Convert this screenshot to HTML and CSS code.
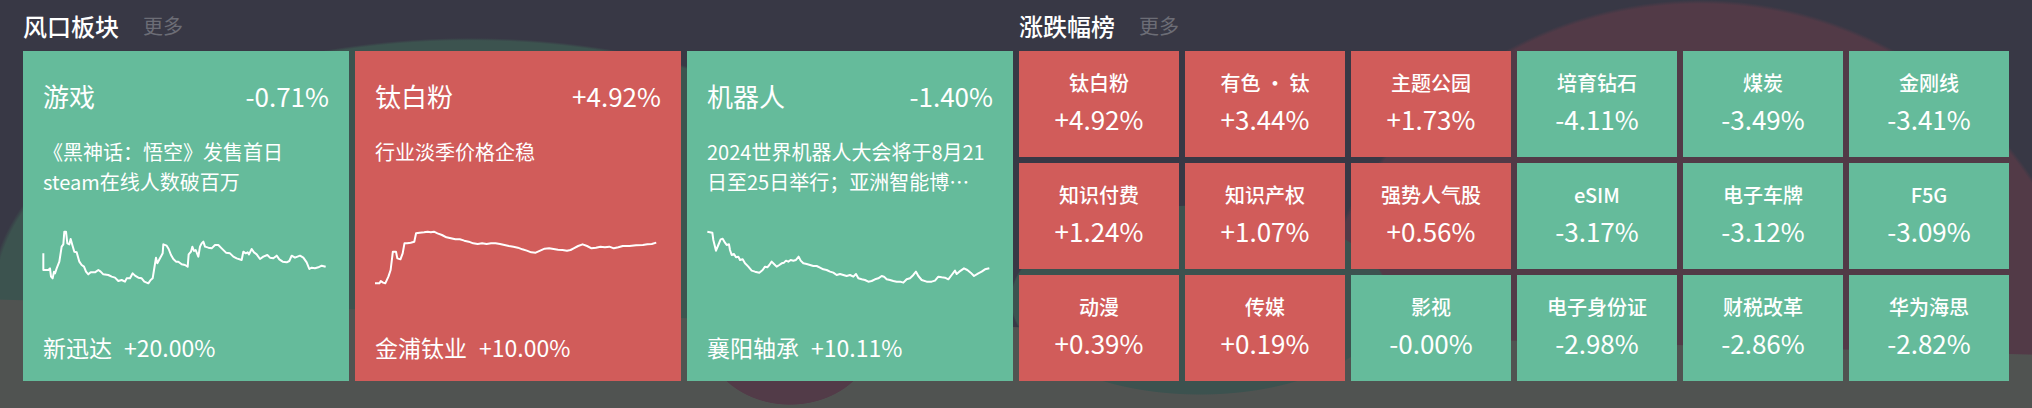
FILE: index.html
```html
<!DOCTYPE html>
<html lang="zh-CN">
<head>
<meta charset="utf-8">
<title>风口板块 / 涨跌幅榜</title>
<link rel="stylesheet" href="styles.css">
</head>
<body>
<div class="page">
  <section class="panel">
    <div class="panel-head"><h2 class="panel-title">风口板块</h2><span class="more">更多</span></div>
    <div class="cards">
      <div class="card down">
        <div class="card-head"><span>游戏</span><span>-0.71%</span></div>
        <p class="desc">《黑神话：悟空》发售首日steam在线人数破百万</p>
        <svg class="spark" viewBox="0 0 286 65" preserveAspectRatio="none">
          <polyline transform="translate(-13,-10) scale(0.33333)" vector-effect="non-scaling-stroke" points="40,115 40,165 55,165 60,160 63,185 68,190 72,170 75,175 80,160 88,140 95,95 100,88 103,50 108,50 112,85 118,88 122,72 127,90 133,110 140,112 148,140 155,150 162,155 168,170 175,178 182,172 195,172 205,165 212,170 220,178 235,180 245,185 255,188 265,198 275,195 285,200 290,190 300,190 308,175 315,182 325,188 335,190 343,200 355,205 362,195 368,190 372,165 378,128 382,145 390,130 398,115 400,88 410,92 416,102 423,120 430,132 438,140 445,140 455,148 465,150 473,155 476,118 483,110 487,95 492,108 497,105 505,125 510,95 515,85 520,80 525,95 535,98 545,100 555,90 565,90 575,100 588,113 600,115 610,125 620,130 635,135 640,110 647,115 653,112 657,118 665,102 672,112 680,118 690,132 700,125 712,120 720,128 730,130 740,122 748,133 758,140 770,142 778,138 785,122 795,128 810,122 820,128 830,142 838,162 845,158 855,160 865,157 875,152 887,155"/>
        </svg>
        <div class="lead"><span>新迅达</span><span class="lead-pct">+20.00%</span></div>
      </div>
      <div class="card up">
        <div class="card-head"><span>钛白粉</span><span>+4.92%</span></div>
        <p class="desc">行业淡季价格企稳</p>
        <svg class="spark" viewBox="0 0 286 65" preserveAspectRatio="none">
          <polyline transform="translate(-375,-25) scale(0.44643,0.33333)" vector-effect="non-scaling-stroke" points="840,250 850,250 853,243 858,248 863,250 870,230 875,210 880,155 887,155 890,175 897,178 902,160 906,130 912,130 920,128 928,125 932,100 940,98 950,97 958,95 965,97 972,95 980,100 990,105 1000,112 1010,115 1020,118 1030,118 1040,122 1050,125 1060,130 1070,132 1080,130 1090,132 1100,130 1110,130 1120,132 1130,135 1140,138 1150,140 1160,143 1170,148 1180,152 1190,157 1200,158 1210,152 1220,146 1230,145 1240,147 1250,149 1260,150 1270,152 1278,150 1285,145 1295,138 1305,133 1315,138 1325,145 1335,143 1345,140 1355,142 1365,140 1375,145 1385,142 1395,138 1410,138 1425,136 1440,135 1450,133 1460,132 1470,128"/>
        </svg>
        <div class="lead"><span>金浦钛业</span><span class="lead-pct">+10.00%</span></div>
      </div>
      <div class="card down">
        <div class="card-head"><span>机器人</span><span>-1.40%</span></div>
        <p class="desc">2024世界机器人大会将于8月21日至25日举行；亚洲智能博Expo 2024同期举办</p>
        <svg class="spark" viewBox="0 0 286 65" preserveAspectRatio="none">
          <polyline transform="translate(-27,-225) scale(0.33333)" vector-effect="non-scaling-stroke" points="82,695 97,698 100,720 108,752 115,735 122,718 128,716 135,728 140,735 147,733 150,750 155,765 162,762 168,772 175,770 180,780 188,778 195,790 205,800 215,812 225,815 238,818 248,810 255,800 262,802 268,795 275,785 282,792 290,800 298,795 305,790 312,788 318,782 325,785 332,780 340,782 348,780 356,770 362,782 370,790 380,792 390,795 400,798 410,798 420,803 430,808 440,810 450,815 460,818 470,825 480,822 490,825 500,828 510,825 520,830 528,822 535,835 545,838 555,840 565,845 575,843 585,838 595,835 605,828 612,830 620,838 630,840 640,843 650,845 660,845 670,848 680,838 690,835 700,825 708,815 715,828 725,840 740,845 755,845 765,842 775,830 785,832 795,833 805,838 815,825 825,812 830,822 838,815 852,805 862,810 872,818 882,828 895,820 905,815 915,808 928,805"/>
        </svg>
        <div class="lead"><span>襄阳轴承</span><span class="lead-pct">+10.11%</span></div>
      </div>
    </div>
  </section>
  <section class="panel">
    <div class="panel-head"><h2 class="panel-title">涨跌幅榜</h2><span class="more">更多</span></div>
    <div class="grid">
      <div class="tile up"><span class="tile-name">钛白粉</span><span class="tile-pct">+4.92%</span></div>
      <div class="tile up"><span class="tile-name">有色 · 钛</span><span class="tile-pct">+3.44%</span></div>
      <div class="tile up"><span class="tile-name">主题公园</span><span class="tile-pct">+1.73%</span></div>
      <div class="tile down"><span class="tile-name">培育钻石</span><span class="tile-pct">-4.11%</span></div>
      <div class="tile down"><span class="tile-name">煤炭</span><span class="tile-pct">-3.49%</span></div>
      <div class="tile down"><span class="tile-name">金刚线</span><span class="tile-pct">-3.41%</span></div>
      <div class="tile up"><span class="tile-name">知识付费</span><span class="tile-pct">+1.24%</span></div>
      <div class="tile up"><span class="tile-name">知识产权</span><span class="tile-pct">+1.07%</span></div>
      <div class="tile up"><span class="tile-name">强势人气股</span><span class="tile-pct">+0.56%</span></div>
      <div class="tile down"><span class="tile-name">eSIM</span><span class="tile-pct">-3.17%</span></div>
      <div class="tile down"><span class="tile-name">电子车牌</span><span class="tile-pct">-3.12%</span></div>
      <div class="tile down"><span class="tile-name">F5G</span><span class="tile-pct">-3.09%</span></div>
      <div class="tile up"><span class="tile-name">动漫</span><span class="tile-pct">+0.39%</span></div>
      <div class="tile up"><span class="tile-name">传媒</span><span class="tile-pct">+0.19%</span></div>
      <div class="tile down"><span class="tile-name">影视</span><span class="tile-pct">-0.00%</span></div>
      <div class="tile down"><span class="tile-name">电子身份证</span><span class="tile-pct">-2.98%</span></div>
      <div class="tile down"><span class="tile-name">财税改革</span><span class="tile-pct">-2.86%</span></div>
      <div class="tile down"><span class="tile-name">华为海思</span><span class="tile-pct">-2.82%</span></div>
    </div>
  </section>
</div>
</body>
</html>
```

FILE: styles.css
```css
html, body {
  margin: 0;
  padding: 0;
}

body {
  width: 2032px;
  height: 408px;
  overflow: hidden;
  font-family: "Noto Sans CJK SC", "Noto Sans", sans-serif;
  color: #ffffff;
  background-color: #383845;
  background-image:
    radial-gradient(ellipse 190px 95px at 1200px 300px, #3c524f 99%, rgba(60, 82, 79, 0) 100%),
    radial-gradient(ellipse 85px 70px at 790px 335px, #523b48 99%, rgba(82, 59, 72, 0) 100%),
    linear-gradient(181.55deg, rgba(80, 83, 81, 0) 354px, #505351 355px),
    radial-gradient(circle 400px at 1700px 400px, #523a47 99%, rgba(82, 58, 71, 0) 100%),
    radial-gradient(ellipse 480px 262px at 470px 300px, #3c534f 99%, rgba(60, 83, 79, 0) 100%);
}

.page {
  display: flex;
  gap: 6px;
  padding: 0 23px;
}

.panel {
  flex: 1;
  min-width: 0;
}

.panel-head {
  height: 51px;
  display: flex;
  align-items: center;
}

.panel-title {
  margin: 0;
  font-size: 24px;
  font-weight: 500;
  line-height: 30px;
}

.more {
  margin-left: 24px;
  font-size: 20px;
  line-height: 30px;
  color: #6c6d76;
}

.cards {
  display: flex;
  gap: 6px;
  height: 330px;
}

.card {
  flex: 1;
  min-width: 0;
  display: flex;
  flex-direction: column;
  padding: 28px 20px 21px;
}

.up { background-color: #d15c5a; }
.down { background-color: #65bb9b; }

.card-head {
  display: flex;
  justify-content: space-between;
  font-size: 26px;
  line-height: 34px;
}

.desc {
  margin: 24px 0 0;
  height: 60px;
  font-size: 20px;
  line-height: 30px;
  overflow: hidden;
  display: -webkit-box;
  -webkit-line-clamp: 2;
  -webkit-box-orient: vertical;
}

.spark {
  display: block;
  margin-top: 28px;
  width: 100%;
  height: 65px;
  overflow: visible;
}

.spark polyline {
  fill: none;
  stroke: #ffffff;
  stroke-width: 2;
  stroke-linejoin: round;
}

.lead {
  margin-top: auto;
  font-size: 23px;
  line-height: 26px;
  white-space: nowrap;
}

.lead-pct {
  margin-left: 12px;
}

.grid {
  display: grid;
  grid-template-columns: repeat(6, 1fr);
  grid-template-rows: repeat(3, 106px);
  gap: 6px;
}

.tile {
  padding-top: 17px;
  text-align: center;
}

.tile-name {
  display: block;
  font-size: 20px;
  font-weight: 500;
  line-height: 30px;
}

.tile-pct {
  display: block;
  margin-top: 3px;
  font-size: 26px;
  line-height: 36px;
}
```
